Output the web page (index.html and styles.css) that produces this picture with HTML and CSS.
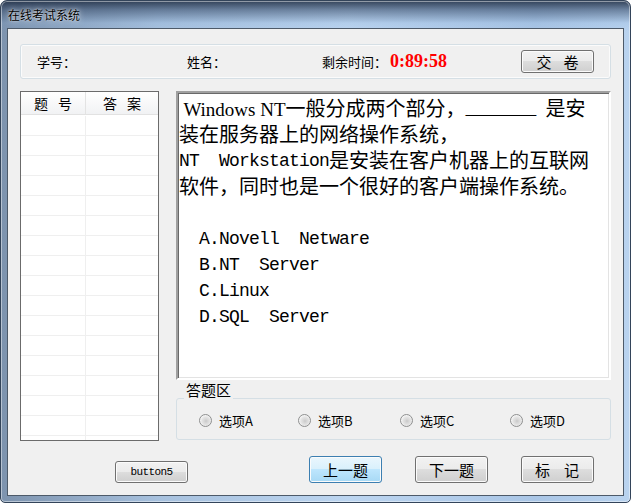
FILE: index.html
```html
<!DOCTYPE html>
<html lang="zh-CN">
<head>
  <meta charset="UTF-8">
  <meta name="viewport" content="width=device-width, initial-scale=1.0">
  <title>在线考试系统</title>
  <link rel="stylesheet" href="styles.css">
</head>
<body>

<div class="window">
  <div class="titlebar">在线考试系统</div>

  <div class="client">
    <div class="info-bar">
      <span class="info-label id-label">学号：</span>
      <span class="info-label name-label">姓名：</span>
      <span class="info-label">剩余时间：</span>
      <span class="timer">0:89:58</span>
      <button class="btn btn-submit btn-spaced">交卷</button>
    </div>

    <div class="main">
      <div class="answer-list">
        <div class="list-head">
          <span>题号</span>
          <span>答案</span>
        </div>
        <div class="list-body">
          <div class="list-row"><span></span><span></span></div>
          <div class="list-row"><span></span><span></span></div>
          <div class="list-row"><span></span><span></span></div>
          <div class="list-row"><span></span><span></span></div>
          <div class="list-row"><span></span><span></span></div>
          <div class="list-row"><span></span><span></span></div>
          <div class="list-row"><span></span><span></span></div>
          <div class="list-row"><span></span><span></span></div>
          <div class="list-row"><span></span><span></span></div>
          <div class="list-row"><span></span><span></span></div>
          <div class="list-row"><span></span><span></span></div>
          <div class="list-row"><span></span><span></span></div>
          <div class="list-row"><span></span><span></span></div>
          <div class="list-row"><span></span><span></span></div>
          <div class="list-row"><span></span><span></span></div>
          <div class="list-row"><span></span><span></span></div>
          <div class="list-row"><span></span><span></span></div>
        </div>
      </div>

      <div class="question-col">
        <div class="question-box">
          <div class="line"><span class="serif"> Windows NT</span>一般分成两个部分，<span class="mono">_______ </span>是安</div>
          <div class="line">装在服务器上的网络操作系统，</div>
          <div class="line"><span class="mono">NT  Workstation</span>是安装在客户机器上的互联网</div>
          <div class="line">软件，同时也是一个很好的客户端操作系统。</div>
          <div class="line"></div>
          <div class="line"><span class="mono">  A.Novell  Netware</span></div>
          <div class="line"><span class="mono">  B.NT  Server</span></div>
          <div class="line"><span class="mono">  C.Linux</span></div>
          <div class="line"><span class="mono">  D.SQL  Server</span></div>
        </div>

        <fieldset class="answer-area">
          <legend>答题区</legend>
          <label class="choice"><span class="radio"></span>选项A</label>
          <label class="choice"><span class="radio"></span>选项B</label>
          <label class="choice"><span class="radio"></span>选项C</label>
          <label class="choice"><span class="radio"></span>选项D</label>
        </fieldset>
      </div>
    </div>

    <div class="actions">
      <button class="btn btn-small">button5</button>
      <div class="nav-buttons">
        <button class="btn btn-focus">上一题</button>
        <button class="btn">下一题</button>
        <button class="btn btn-spaced btn-wide-space">标记</button>
      </div>
    </div>
  </div>
</div>

</body>
</html>
```

FILE: styles.css
```css
body {
  margin: 0;
  width: 631px;
  height: 503px;
  overflow: hidden;
  background: #fff;
  font-family: "Noto Sans CJK SC", sans-serif;
  color: #000;
}

/* aero style window frame */
.window {
  width: 631px;
  height: 503px;
  box-sizing: border-box;
  display: flex;
  flex-direction: column;
  padding: 0 6px 6px;
  border: 1px solid #33445a;
  border-radius: 7px 7px 5px 5px;
  box-shadow: inset 0 0 0 1px rgba(255, 255, 255, 0.45);
  background:
    linear-gradient(180deg, rgba(28, 42, 64, 0.85) 0, rgba(48, 68, 98, 0.55) 9px, rgba(120, 160, 205, 0.15) 22px, rgba(0, 0, 0, 0) 30px),
    linear-gradient(90deg, #7d93ae 0%, #a7c1de 25%, #bcd5f0 55%, #aac6e6 85%, #b9d3ef 100%);
}

.titlebar {
  height: 27px;
  line-height: 27px;
  padding-left: 1px;
  font-size: 12px;
  text-shadow: 0 0 6px rgba(255, 255, 255, 0.9), 0 0 2px rgba(255, 255, 255, 0.8);
}

.client {
  flex: 1;
  display: flex;
  flex-direction: column;
  border: 1px solid #4d5a69;
  background: #f0f0f0;
  padding: 15px 12px 0 12px;
}

/* top info strip */
.info-bar {
  height: 33px;
  display: flex;
  align-items: center;
  padding: 0 16px;
  border: 1px solid #d5dfe5;
  border-radius: 3px;
  box-shadow: inset 0 0 0 1px #fbfbfb;
}

.info-label {
  font-size: 13px;
}

.id-label {
  width: 150px;
}

.name-label {
  width: 135px;
}

.timer {
  margin-left: 3px;
  font-family: "Liberation Serif", serif;
  font-weight: bold;
  font-size: 18px;
  color: #ff0000;
}

.btn {
  box-sizing: border-box;
  width: 73px;
  height: 27px;
  padding: 0;
  border: 1px solid #707070;
  border-radius: 3px;
  background: linear-gradient(#f2f2f2, #ebebeb 49%, #dddddd 50%, #cfcfcf);
  box-shadow: inset 0 0 0 1px #fbfbfb;
  font-family: "Noto Sans CJK SC", sans-serif;
  font-size: 15px;
  color: #000;
  white-space: nowrap;
}

.btn-submit {
  height: 23px;
  margin-left: auto;
}

.btn-spaced {
  letter-spacing: 12px;
  padding-left: 12px;
}

.btn-wide-space {
  letter-spacing: 14px;
  padding-left: 13px;
}

.btn-focus {
  border-color: #3c7fb1;
  background: linear-gradient(#eaf6fd, #d9f0fc 49%, #bee6fd 50%, #a7d9f5);
}

.btn-small {
  height: 22px;
  margin: 5px 0 0 95px;
  font-family: "Liberation Mono", monospace;
  font-size: 11px;
  letter-spacing: -0.6px;
}

/* main area */
.main {
  display: flex;
  gap: 17px;
  height: 350px;
  margin-top: 12px;
}

.answer-list {
  width: 139px;
  box-sizing: border-box;
  border: 1px solid #6b6b6b;
  background: #fff;
  display: flex;
  flex-direction: column;
  overflow: hidden;
}

.list-head {
  display: grid;
  grid-template-columns: 65px 1fr;
  height: 23px;
  box-sizing: border-box;
  border-bottom: 1px solid #e2e2e2;
  background: linear-gradient(#ffffff, #f1f2f4);
  font-size: 14px;
  letter-spacing: 10px;
  line-height: 22px;
}

.list-head span {
  text-align: center;
  padding-left: 10px;
}

.list-head span:first-child {
  border-right: 1px solid #e3e3e3;
}

.list-body {
  padding-top: 1px;
  flex: 1;
  overflow: hidden;
}

.list-row {
  display: grid;
  grid-template-columns: 65px 1fr;
  height: 20px;
  box-sizing: border-box;
  border-bottom: 1px solid #efefef;
}

.list-row span:first-child {
  border-right: 1px solid #efefef;
}

.question-col {
  flex: 1;
  display: flex;
  flex-direction: column;
}

.question-box {
  height: 289px;
  box-sizing: border-box;
  padding: 2px 0 0 1px;
  background: #fff;
  border: 2px solid;
  border-color: #a0a0a0 #ffffff #ffffff #a0a0a0;
  box-shadow: inset 1px 1px 0 #696969, inset -1px -1px 0 #e3e3e3;
  font-size: 20px;
  overflow: hidden;
}

.line {
  height: 26px;
  line-height: 26px;
  white-space: pre;
}

.serif {
  font-family: "Liberation Serif", serif;
  font-size: 19px;
}

.mono {
  font-family: "Liberation Mono", monospace;
  font-size: 18px;
  line-height: 20px;
  letter-spacing: -0.8px;
  vertical-align: 2px;
}

/* answer radio group */
.answer-area {
  margin: 2px 0 0;
  padding: 0 0 0 22px;
  min-width: 0;
  height: 58px;
  box-sizing: border-box;
  border: 1px solid #d5dfe5;
  border-radius: 3px;
  display: grid;
  grid-template-columns: 99px 102px 110px auto;
  align-items: center;
}

.answer-area legend {
  margin-left: -15px;
  padding: 0 2px 17px;
  font-size: 15px;
  line-height: 15px;
}

.choice {
  display: flex;
  align-items: center;
  gap: 7px;
  margin-top: -3px;
  font-size: 13px;
}

.radio {
  width: 13px;
  height: 13px;
  box-sizing: border-box;
  border-radius: 50%;
  border: 1px solid #8e8f8f;
  background: radial-gradient(circle at 55% 55%, #c9c9c9 0, #d8d8d8 2px, #e4e4e4 4px, #f6f6f6 6px);
}

/* bottom buttons */
.actions {
  display: flex;
  align-items: flex-start;
  margin-top: 15px;
}

.nav-buttons {
  display: flex;
  gap: 33px;
  margin: 0 17px 0 auto;
}
```
